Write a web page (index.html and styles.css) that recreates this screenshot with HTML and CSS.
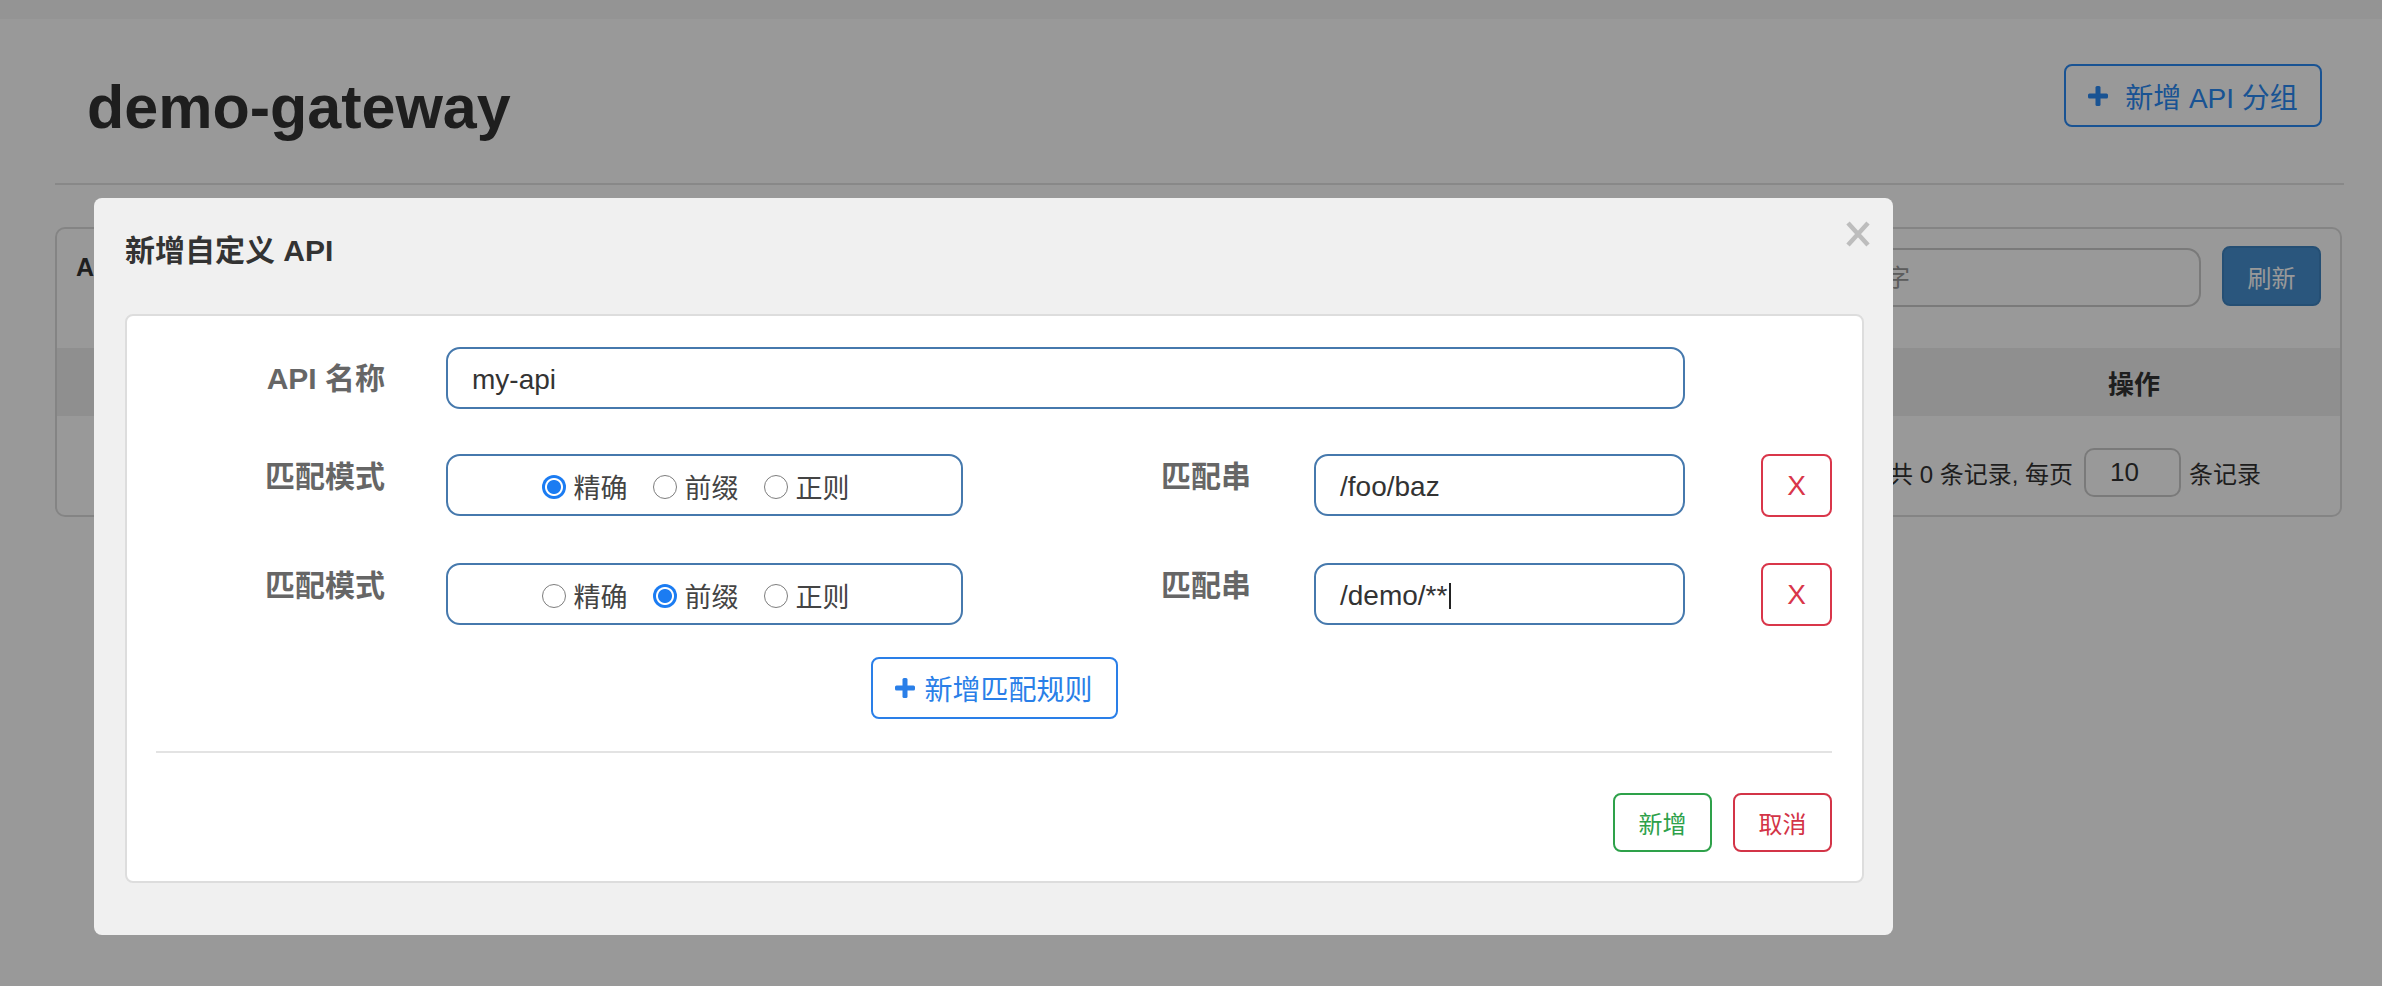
FILE: index.html
```html
<!DOCTYPE html>
<html lang="zh-CN">
<head>
<meta charset="utf-8">
<title>demo-gateway</title>
<link rel="stylesheet" href="styles.css">
</head>
<body>
<div class="topbar"></div>
<main class="page">
  <header class="page-header">
    <h1 class="app-title">demo-gateway</h1>
    <button class="btn btn-add-group">
      <svg class="icon-plus" viewBox="0 0 20 20"><rect x="7.5" y="0" width="5" height="20" rx="1.5"/><rect x="0" y="7.5" width="20" height="5" rx="1.5"/></svg>新增 API 分组
    </button>
  </header>

  <section class="panel">
    <div class="panel-heading">
      <span class="panel-title">API</span>
      <div class="panel-tools">
        <div class="search-input">请输入关键字</div>
        <button class="btn btn-refresh">刷新</button>
      </div>
    </div>
    <div class="table-head">
      <span class="th"></span>
      <span class="th"></span>
      <span class="th"></span>
      <span class="th">操作</span>
    </div>
    <div class="pager">
      <span>共 0 条记录, 每页</span>
      <span class="page-size">10</span>
      <span>条记录</span>
    </div>
  </section>
</main>

<div class="overlay">
  <div class="dialog">
    <button class="dialog-close" aria-label="关闭">
      <svg viewBox="0 0 26 26"><path d="M3 2 L23 24 M23 2 L3 24"/></svg>
    </button>
    <h2 class="dialog-title">新增自定义 API</h2>
    <div class="dialog-body">
      <div class="form-row">
        <label class="form-label form-label-center">API 名称</label>
        <div class="form-control span-wide">my-api</div>
      </div>

      <div class="form-row row-gap-1">
        <label class="form-label">匹配模式</label>
        <div class="radio-group">
          <span class="radio"><span class="radio-dot checked"></span>精确</span>
          <span class="radio"><span class="radio-dot"></span>前缀</span>
          <span class="radio"><span class="radio-dot"></span>正则</span>
        </div>
        <label class="form-label form-label-sub">匹配串</label>
        <div class="form-control">/foo/baz</div>
        <div class="cell-end"><button class="btn btn-remove">X</button></div>
      </div>

      <div class="form-row row-gap-2">
        <label class="form-label">匹配模式</label>
        <div class="radio-group">
          <span class="radio"><span class="radio-dot"></span>精确</span>
          <span class="radio"><span class="radio-dot checked"></span>前缀</span>
          <span class="radio"><span class="radio-dot"></span>正则</span>
        </div>
        <label class="form-label form-label-sub">匹配串</label>
        <div class="form-control">/demo/**<span class="caret"></span></div>
        <div class="cell-end"><button class="btn btn-remove">X</button></div>
      </div>

      <div class="add-row">
        <button class="btn btn-add-rule">
          <svg class="icon-plus" viewBox="0 0 20 20"><rect x="7.5" y="0" width="5" height="20" rx="1.5"/><rect x="0" y="7.5" width="20" height="5" rx="1.5"/></svg>新增匹配规则
        </button>
      </div>

      <hr class="divider">

      <div class="dialog-footer">
        <button class="btn btn-ok">新增</button>
        <button class="btn btn-cancel">取消</button>
      </div>
    </div>
  </div>
</div>
</body>
</html>
```

FILE: styles.css
```css
* { box-sizing: border-box; }

html, body { margin: 0; padding: 0; }

body {
  width: 2382px;
  height: 986px;
  overflow: hidden;
  background: #fff;
  color: #333;
  font-family: "Liberation Sans", "Noto Sans CJK SC", sans-serif;
}

.topbar {
  height: 19px;
  background: #f7f7f7;
}

.page {
  margin-left: 55px;
  width: 2289px;
}

/* ---------- page header ---------- */
.page-header {
  display: flex;
  justify-content: space-between;
  align-items: flex-start;
  height: 166px;
  padding: 45px 22px 0 32px;
  border-bottom: 2px solid #e3e3e3;
}

.app-title {
  margin: 13px 0 0;
  font-size: 61px;
  line-height: 60px;
  font-weight: bold;
  color: #333;
}

.btn {
  font-family: inherit;
  background: transparent;
  border: 2px solid currentColor;
  border-radius: 8px;
  display: inline-flex;
  align-items: center;
  justify-content: center;
  padding: 0;
  margin: 0;
  cursor: pointer;
  white-space: nowrap;
}

.icon-plus {
  width: 20px;
  height: 20px;
  fill: currentColor;
  flex: none;
}

.btn-add-group {
  width: 258px;
  height: 63px;
  color: #2b8af5;
  font-size: 28px;
}
.btn-add-group .icon-plus { margin-right: 17px; }

/* ---------- panel ---------- */
.panel {
  margin-top: 42px;
  width: 2287px;
  height: 290px;
  border: 2px solid #ddd;
  border-radius: 10px;
  overflow: hidden;
}

.panel-heading {
  height: 119px;
  display: flex;
  justify-content: space-between;
  align-items: flex-start;
  padding: 17px 19px 0;
}

.panel-title {
  margin-top: 6px;
  font-size: 25px;
  line-height: 30px;
  font-weight: bold;
  color: #333;
}

.panel-tools {
  display: flex;
  align-items: flex-start;
}

.search-input {
  margin-top: 2px;
  width: 449px;
  height: 59px;
  border: 2px solid #ccc;
  border-radius: 14px;
  padding-left: 12px;
  font-size: 24px;
  line-height: 55px;
  color: #999;
}

.btn-refresh {
  margin-left: 21px;
  width: 99px;
  height: 60px;
  background: #4790d0;
  border-color: #3f84c2;
  color: #fff;
  font-size: 24px;
}

.table-head {
  height: 68px;
  background: #eee;
  display: grid;
  grid-template-columns: 1fr 1fr 1fr 412px;
  align-items: center;
}

.th {
  text-align: center;
  font-size: 26px;
  font-weight: bold;
  color: #333;
}

.pager {
  height: 99px;
  padding: 14px 79px 0 0;
  display: flex;
  justify-content: flex-end;
  align-items: center;
  font-size: 24px;
  color: #333;
}

.page-size {
  width: 97px;
  height: 49px;
  margin: 0 8px 0 11px;
  border: 2px solid #ccc;
  border-radius: 10px;
  padding-left: 24px;
  font-size: 26px;
  line-height: 45px;
}

/* ---------- dialog ---------- */
.overlay {
  position: fixed;
  inset: 0;
  background: rgba(0, 0, 0, 0.4);
  padding: 198px 0 0 94px;
}

.dialog {
  position: relative;
  width: 1799px;
  background: #f0f0f0;
  border-radius: 8px;
  padding: 35px 29px 52px 31px;
}

.dialog-close {
  position: absolute;
  top: 23px;
  right: 22px;
  width: 26px;
  height: 26px;
  padding: 0;
  border: 0;
  background: transparent;
}
.dialog-close svg {
  width: 26px;
  height: 26px;
  display: block;
  stroke: #bdbdbd;
  stroke-width: 4.5;
  fill: none;
}

.dialog-title {
  margin: 0 0 45px;
  font-size: 30px;
  line-height: 36px;
  font-weight: bold;
  color: #333;
}

.dialog-body {
  background: #fff;
  border: 2px solid #ddd;
  border-radius: 8px;
  padding: 31px 30px 29px 29px;
}

.form-row {
  display: grid;
  grid-template-columns: 290px 517px 351px 371px 147px;
  height: 62px;
}
.row-gap-1 { margin-top: 45px; }
.row-gap-2 { margin-top: 47px; }

.form-label {
  align-self: start;
  padding-top: 5px;
  text-align: right;
  padding-right: 61px;
  font-size: 30px;
  line-height: 36px;
  font-weight: bold;
  color: #666;
}
.form-label-center { align-self: center; padding-top: 2px; }
.form-label-sub { padding-right: 63px; }

.form-control {
  height: 62px;
  border: 2px solid #4679ad;
  border-radius: 14px;
  padding: 3px 0 0 24px;
  display: flex;
  align-items: center;
  font-size: 28px;
  color: #333;
}
.span-wide { grid-column: 2 / 5; }

.caret {
  display: inline-block;
  width: 2px;
  height: 26px;
  margin-left: 2px;
  background: #222;
}

.radio-group {
  height: 62px;
  border: 2px solid #4679ad;
  border-radius: 14px;
  display: flex;
  justify-content: center;
  align-items: center;
  padding: 3px 18px 0 0;
  font-size: 27px;
  color: #444;
}

.radio {
  display: inline-flex;
  align-items: center;
  margin-right: 25px;
}
.radio:last-child { margin-right: 0; }

.radio-dot {
  width: 24px;
  height: 24px;
  margin-right: 8px;
  border-radius: 50%;
  border: 1.5px solid #7d7d7d;
  background: #fff;
}
.radio-dot.checked {
  border: 0;
  background: radial-gradient(circle, #1b7cf2 0 6.5px, #fff 7.5px 8.5px, #1b7cf2 9.5px);
}

.cell-end {
  display: flex;
  justify-content: flex-end;
}

.btn-remove {
  width: 71px;
  height: 63px;
  color: #d9364a;
  font-size: 28px;
}

.add-row {
  margin-top: 32px;
  display: flex;
  justify-content: center;
}

.btn-add-rule {
  width: 247px;
  height: 62px;
  color: #2a7fe8;
  font-size: 28px;
}
.btn-add-rule .icon-plus { margin-right: 9px; }

.divider {
  margin: 32px 0 0;
  border: 0;
  border-top: 2px solid #e3e3e3;
}

.dialog-footer {
  margin-top: 40px;
  display: flex;
  justify-content: flex-end;
  gap: 21px;
}

.btn-ok,
.btn-cancel {
  width: 99px;
  height: 59px;
  font-size: 24px;
}
.btn-ok { color: #2ea14a; }
.btn-cancel { color: #d33447; }
```
